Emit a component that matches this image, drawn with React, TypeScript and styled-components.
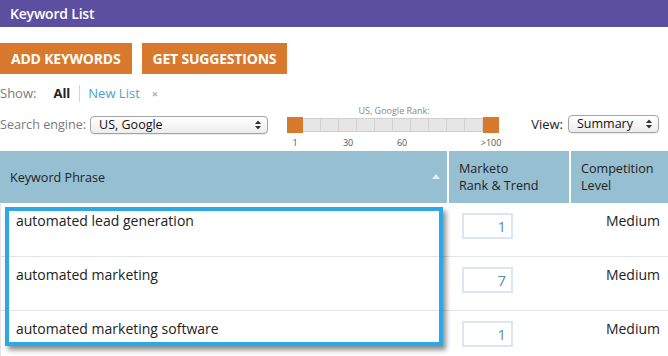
import { styled, createGlobalStyle } from "styled-components";
import type { FC } from "react";

const GlobalStyle = createGlobalStyle`
  html, body {
    margin: 0;
    padding: 0;
    background: #fff;
  }
  body {
    font-family: "Open Sans", "Liberation Sans", sans-serif;
    color: #222;
    overflow: hidden;
  }
`;

const Page = styled.div`
  width: 668px;
  height: 356px;
  overflow: hidden;
`;

// 标题栏
const TitleBar = styled.div`
  height: 27px;
  line-height: 27px;
  background: #5d4fa0;
  color: #fff;
  font-size: 14px;
  font-weight: 600;
  padding-left: 10px;
  letter-spacing: -0.2px;
`;

const ButtonRow = styled.div`
  display: flex;
  gap: 10px;
  margin-top: 16px;
`;

const ActionButton = styled.button`
  height: 31px;
  padding: 0 11px;
  border: none;
  background: #d9792b;
  color: #fff;
  font-family: "Open Sans", "Liberation Sans", sans-serif;
  font-size: 14px;
  font-weight: 700;
  letter-spacing: -0.2px;
  cursor: pointer;
`;

const ShowRow = styled.div`
  display: flex;
  align-items: center;
  height: 18px;
  margin-top: 10px;
  font-size: 13px;
`;

const Muted = styled.span`
  color: #7a7a7a;
`;

const FilterAll = styled.span`
  margin-left: 17px;
  font-weight: 700;
  color: #222;
`;

const Divider = styled.span`
  width: 1px;
  height: 17px;
  background: #d4d4d4;
  margin: 0 8px 0 9px;
`;

const FilterLink = styled.a`
  color: #4d9fd0;
  text-decoration: none;
`;

const RemoveX = styled.span`
  margin-left: 12px;
  font-size: 11px;
  color: #b0b0b0;
  font-weight: 700;
`;

const SearchRow = styled.div`
  display: flex;
  align-items: flex-start;
  height: 47px;
  margin-top: 2px;
`;

const FieldLabel = styled.span<{ $dark?: boolean; $top: number }>`
  margin-top: ${(p) => p.$top}px;
  font-size: ${(p) => (p.$dark ? 13 : 12.6)}px;
  line-height: 18px;
  color: ${(p) => (p.$dark ? "#222" : "#7a7a7a")};
`;

const SelectBox = styled.div<{ $width: number; $top: number; $height: number }>`
  position: relative;
  box-sizing: border-box;
  width: ${(p) => p.$width}px;
  height: ${(p) => p.$height}px;
  margin-top: ${(p) => p.$top}px;
  border: 1px solid #a3a3a3;
  border-radius: 4px;
  background: linear-gradient(#ffffff, #ededed);
  box-shadow: 0 1px 1px rgba(0, 0, 0, 0.08);
  font-size: 12.5px;
  line-height: ${(p) => p.$height - 2}px;
  padding-left: 8px;
  color: #111;
`;

const SelectArrows = styled.svg`
  position: absolute;
  right: 6px;
  top: 50%;
  transform: translateY(-50%);
`;

const Select: FC<{ value: string; width: number; top: number; height: number; className?: string }> = ({
  value,
  width,
  top,
  height,
  className,
}) => (
  <SelectBox $width={width} $top={top} $height={height} className={className}>
    {value}
    <SelectArrows width="6" height="9" viewBox="0 0 6 9">
      <path d="M3 0 L6 3.5 H0 Z M3 9 L6 5.5 H0 Z" fill="#333" />
    </SelectArrows>
  </SelectBox>
);

const EngineSelect = styled(Select)`
  margin-left: 4px;
`;

// 排名滑块
const RankSlider = styled.div`
  position: relative;
  width: 212px;
  margin-left: 19px;
  margin-top: 2px;
`;

const RankCaption = styled.div`
  font-size: 9px;
  line-height: 10px;
  color: #888;
  text-align: center;
  padding-left: 2px;
`;

const Track = styled.div`
  display: flex;
  align-items: center;
  margin-top: 1px;
  height: 16px;
`;

const Handle = styled.div`
  width: 16px;
  height: 16px;
  background: #d9792b;
  flex: none;
`;

const Cell = styled.div`
  box-sizing: border-box;
  width: 18px;
  height: 14px;
  background: #e6e6e6;
  border-top: 1px solid #cfcfcf;
  border-bottom: 1px solid #cfcfcf;
  border-right: 1px solid #d2d2d2;
  flex: none;
  &:last-of-type {
    border-right: none;
  }
`;

const Ticks = styled.div`
  position: relative;
  height: 14px;
  margin-top: 4px;
`;

const Tick = styled.span`
  position: absolute;
  top: 0;
  transform: translateX(-50%);
  font-size: 9px;
  line-height: 12px;
  color: #555;
`;

const Spacer = styled.div`
  flex: 1;
`;

const ViewGroup = styled.div`
  display: flex;
  align-items: flex-start;
  gap: 5px;
  padding-right: 9px;
`;

// 表格
const Table = styled.div`
  position: relative;
`;

const Grid = styled.div`
  display: grid;
  grid-template-columns: 447px 120px 1fr;
  column-gap: 2px;
`;

const HeadCell = styled.div`
  position: relative;
  display: flex;
  flex-direction: column;
  justify-content: center;
  height: 52px;
  padding-left: 10px;
  background: #96bfd2;
  font-size: 12.6px;
  color: #222;
`;

const HeadLine = styled.span`
  display: block;
  line-height: 17px;
`;

const SortArrow = styled.span`
  position: absolute;
  right: 7px;
  top: 23px;
  width: 0;
  height: 0;
  border-left: 4px solid transparent;
  border-right: 4px solid transparent;
  border-bottom: 5px solid #e4eef3;
`;

const Body = styled.div`
  position: relative;
`;

const Row = styled.div`
  display: grid;
  grid-template-columns: 449px 122px 1fr;
  height: 54px;
  border-bottom: 1px solid #e4e4e4;
  border-left: 1px solid #e4e4e4;
  box-sizing: border-box;
`;

const PhraseCell = styled.div`
  padding: 8px 0 0 15px;
  font-size: 14px;
  line-height: 20px;
  color: #222;
`;

const RankCell = styled.div`
  padding: 10px 0 0 12px;
`;

const RankInput = styled.div`
  box-sizing: border-box;
  width: 51px;
  height: 26px;
  border: 2px solid #d8e7f2;
  text-align: right;
  padding-right: 5px;
  font-size: 15px;
  line-height: 22px;
  color: #5b8db2;
`;

const LevelCell = styled.div`
  padding: 8px 8px 0 0;
  text-align: right;
  font-size: 14px;
  line-height: 20px;
  color: #222;
`;

const Highlight = styled.div`
  position: absolute;
  left: 5px;
  top: 4px;
  width: 438px;
  height: 139px;
  box-sizing: border-box;
  border: 4px solid #2ba8e6;
  box-shadow: 3px 4px 5px rgba(0, 0, 0, 0.45);
  pointer-events: none;
`;

const ticks = [
  { label: "1", x: 8 },
  { label: "30", x: 61 },
  { label: "60", x: 115 },
  { label: ">100", x: 204 },
];

const keywords = [
  { phrase: "automated lead generation", rank: 1, level: "Medium" },
  { phrase: "automated marketing", rank: 7, level: "Medium" },
  { phrase: "automated marketing software", rank: 1, level: "Medium" },
];

function App() {
  return (
    <Page>
      <GlobalStyle />
      <TitleBar>Keyword List</TitleBar>
      <ButtonRow>
        <ActionButton>ADD KEYWORDS</ActionButton>
        <ActionButton>GET SUGGESTIONS</ActionButton>
      </ButtonRow>
      <ShowRow>
        <Muted>Show:</Muted>
        <FilterAll>All</FilterAll>
        <Divider />
        <FilterLink href="#">New List</FilterLink>
        <RemoveX>×</RemoveX>
      </ShowRow>
      <SearchRow>
        <FieldLabel $top={12}>Search engine:</FieldLabel>
        <EngineSelect value="US, Google" width={178} top={12} height={18} />
        <RankSlider>
          <RankCaption>US, Google Rank:</RankCaption>
          <Track>
            <Handle />
            {Array.from({ length: 10 }).map((_, i) => (
              <Cell key={i} />
            ))}
            <Handle />
          </Track>
          <Ticks>
            {ticks.map((t) => (
              <Tick key={t.label} style={{ left: t.x }}>
                {t.label}
              </Tick>
            ))}
          </Ticks>
        </RankSlider>
        <Spacer />
        <ViewGroup>
          <FieldLabel $dark $top={11}>
            View:
          </FieldLabel>
          <Select value="Summary" width={91} top={11} height={18} />
        </ViewGroup>
      </SearchRow>
      <Table>
        <Grid>
          <HeadCell>
            <HeadLine>Keyword Phrase</HeadLine>
            <SortArrow />
          </HeadCell>
          <HeadCell>
            <HeadLine>Marketo</HeadLine>
            <HeadLine>Rank &amp; Trend</HeadLine>
          </HeadCell>
          <HeadCell>
            <HeadLine>Competition</HeadLine>
            <HeadLine>Level</HeadLine>
          </HeadCell>
        </Grid>
        <Body>
          {keywords.map((k) => (
            <Row key={k.phrase}>
              <PhraseCell>{k.phrase}</PhraseCell>
              <RankCell>
                <RankInput>{k.rank}</RankInput>
              </RankCell>
              <LevelCell>{k.level}</LevelCell>
            </Row>
          ))}
          <Highlight />
        </Body>
      </Table>
    </Page>
  );
}

export default App;
